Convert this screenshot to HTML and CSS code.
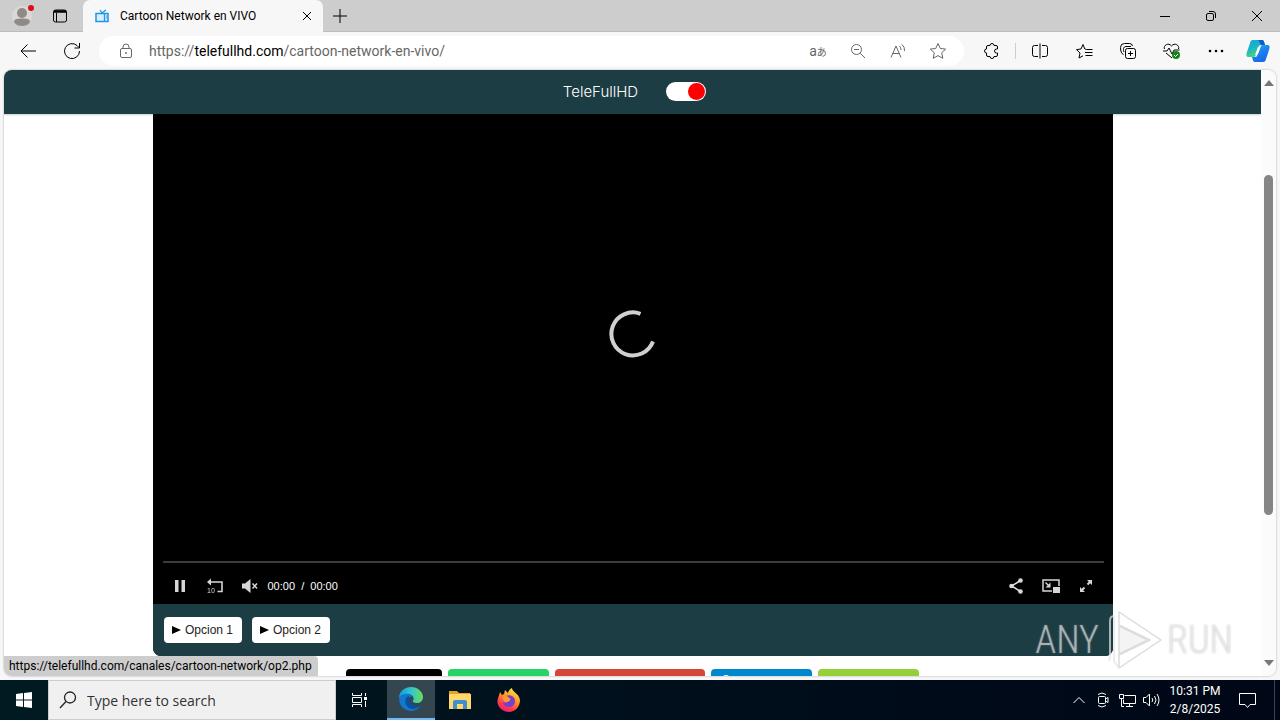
FILE: index.html
```
<!DOCTYPE html>
<html lang="en">
<head>
<meta charset="utf-8">
<title>Cartoon Network en VIVO</title>
<link rel="stylesheet" href="styles.css">
</head>
<body>
<header class="titlebar">
  <button class="tool profile" aria-label="Profile"><svg width="28" height="28" viewBox="0 0 28 28"><circle cx="14" cy="14" r="10" fill="#dcd8d6"/><circle cx="14" cy="11" r="5" fill="#8e8a88"/><path d="M6 20c0-3 3-3.500 8-3.500s8 .5 8 3.500c-2 3-5 4-8 4s-6-1-8-4z" fill="#8e8a88"/><circle cx="23" cy="6" r="3" fill="#e00b1c"/></svg></button>
  <button class="tool tabmenu" aria-label="Tab actions"><svg class="line" width="16" height="16" viewBox="0 0 16 16"><rect x="1.500" y="2" width="13" height="12" rx="2"/><path d="M2 3.500h12" stroke-width="2.500"/><path d="M4.500 5v9"/></svg></button>
  <div class="tab">
    <svg width="14" height="14" viewBox="0 0 14 14"><path d="M1 4.500h12v8H1z" fill="#d8efff" stroke="#2196e8" stroke-width="1.500"/><path d="M5 1l2 3 4-3M9.500 4v9" fill="none" stroke="#2196e8" stroke-width="1.300"/><path d="M11 7h1M11 9h1" stroke="#2196e8"/></svg>
    <span class="tab-title">Cartoon Network en VIVO</span>
    <button class="tab-close" aria-label="Close tab"><svg class="line" width="10" height="10" viewBox="0 0 10 10"><path d="M1 1l8 8M9 1L1 9"/></svg></button>
  </div>
  <button class="new-tab" aria-label="New tab"><svg class="line" width="14" height="14" viewBox="0 0 14 14"><path d="M7 0v14M0 7h14"/></svg></button>
  <div class="window-buttons">
    <button aria-label="Minimize"><svg class="line" width="10" height="10" viewBox="0 0 10 10"><path d="M0 5.500h10"/></svg></button>
    <button aria-label="Restore"><svg class="line" width="10" height="10" viewBox="0 0 10 10"><rect x=".5" y="2.500" width="7" height="7" rx="1.500"/><path d="M3 .5h4a2.500 2.500 0 0 1 2.500 2.500v4"/></svg></button>
    <button aria-label="Close"><svg class="line" width="10" height="10" viewBox="0 0 10 10"><path d="M0 0l10 10M10 0L0 10"/></svg></button>
  </div>
</header>

<nav class="toolbar" aria-label="Browser">
  <button class="nav-button" aria-label="Back"><svg class="line" width="18" height="16" viewBox="0 0 18 16"><path d="M17 8H2M8.500 1.500L2 8l6.500 6.500"/></svg></button>
  <button class="nav-button" aria-label="Refresh"><svg class="line" width="18" height="18" viewBox="0 0 18 18"><path d="M16.500 9A7.500 7.500 0 1 1 14 3.500L16 5.500M16.500 1v5h-5"/></svg></button>
  <div class="address">
    <button class="lock" aria-label="Site information"><svg class="line" width="14" height="16" viewBox="0 0 14 16"><rect x="1.500" y="5.500" width="11" height="9" rx="1.500"/><path d="M4 5.500V4a3 3 0 0 1 6 0v1.500"/><circle cx="7" cy="10" r=".6"/></svg></button>
    <a class="url" href="#">https://<b>telefullhd.com</b>/cartoon-network-en-vivo/</a>
    <button class="tool translate" aria-label="Translate">a<small>あ</small></button>
    <button class="tool" aria-label="Zoom out"><svg class="line" width="16" height="16" viewBox="0 0 16 16"><circle cx="6.500" cy="6.500" r="5"/><path d="M10.200 10.200L15 15M4 6.500h5"/></svg></button>
    <button class="tool" aria-label="Read aloud"><svg class="line" width="18" height="16" viewBox="0 0 18 16"><path d="M2 14.500L7 3l5 11.500M3.500 10.500h7M10.500 3q1.500 1.500 1.500 4M13 1.500q3 2.500 2.500 6.500"/></svg></button>
    <button class="tool" aria-label="Favorite"><svg class="line" width="18" height="18" viewBox="0 0 18 18"><path d="M9 1.500l2.300 5 5.400.6-4 3.700 1.100 5.500L9 13.600l-4.800 2.700 1.100-5.500-4-3.700 5.400-.6z"/></svg></button>
  </div>
  <button class="tool extensions" aria-label="Extensions"><svg class="line" width="16" height="16" viewBox="0 0 16 16"><path d="M5 2.500h2a2 2 0 0 1 4 0h2q1.500 0 1.500 1.500v2h-1a2 2 0 0 0 0 4h1v2q0 1.500-1.500 1.500h-2a2 2 0 0 1-4 0H5q-1.500 0-1.500-1.500V10a2 2 0 0 1 0-4V4q0-1.500 1.500-1.500z"/></svg></button>
  <span class="divider"></span>
  <button class="action" aria-label="Split screen"><svg class="line" width="16" height="16" viewBox="0 0 16 16"><path d="M8 .5v15M6 2.500H2.500a2 2 0 0 0-2 2v7a2 2 0 0 0 2 2H6M10 2.500h3.500a2 2 0 0 1 2 2v7a2 2 0 0 1-2 2H10"/></svg></button>
  <button class="action" aria-label="Favorites"><svg class="line" width="17" height="16" viewBox="0 0 17 16"><path d="M10.500 6.500L8.800 6 7 1.500 5 6l-4.500.6L4 10l-1 5 4-2.200M10.500 6.500h6M9 9.500h7.500M9.500 12.500h7"/></svg></button>
  <button class="action" aria-label="Collections"><svg class="line" width="16" height="16" viewBox="0 0 16 16"><rect x="5.500" y="5.500" width="10" height="10" rx="2"/><path d="M10.500 8v5M8 10.500h5M3.500 11.500C1.500 11 .5 8 .5 4.500a4 4 0 0 1 4-4h5a3 3 0 0 1 3 2.500M4 9c-1-2-.8-5.500 2-5.500h5"/></svg></button>
  <button class="action" aria-label="Browser essentials"><svg class="line" width="18" height="16" viewBox="0 0 18 16"><path d="M1.500 6C0 2.500 5.500-1 8.500 3c3-4 8.500-.5 7 3M0 8h4l2-3 3 6 2-4h5.500M3 10l6 5"/><circle cx="13" cy="12" r="4" fill="#16821c" stroke="none"/><path d="M11 12l1.500 1.500L15 11" stroke="#fff"/></svg></button>
  <button class="action" aria-label="Settings and more"><svg width="16" height="4" viewBox="0 0 16 4"><circle cx="2" cy="2" r="1.300"/><circle cx="8" cy="2" r="1.300"/><circle cx="14" cy="2" r="1.300"/></svg></button>
  <button class="tool" aria-label="Copilot"><svg width="24" height="24" viewBox="0 0 24 24"><defs><linearGradient id="cp1" x2=".5" y2="1"><stop stop-color="#1b9ee8"/><stop offset=".5" stop-color="#18b7c4"/><stop offset="1" stop-color="#55d67c"/></linearGradient><linearGradient id="cp2" x2=".5" y2="1"><stop stop-color="#29b8d8"/><stop offset=".5" stop-color="#1c83f2"/><stop offset="1" stop-color="#1769e8"/></linearGradient></defs><path d="M7 1h9c2 0 2 2 3 5h-4c-2 0-2 1-3 4l-2 6c-.5 1-1 2-3 2H3c-3 0-3-2-2-5l3-9c.6-2 1-3 3-3z" fill="url(#cp1)"/><path d="M17 23H9c-2 0-2-2-3-5h3c2 0 2-1 3-4l2-6c.5-1 1-2 3-2h4c3 0 3 2 2 5l-3 9c-.6 2-1 3-3 3z" fill="url(#cp2)"/><path d="M7 1h9c2 0 2 2 3 5h-4c-1 0-1-5-4-5z" fill="#125bc8"/><path d="M12 8l3-1-3 8-3 1z" fill="#fff"/></svg></button>
</nav>

<div class="frame">
  <div class="page">
    <header class="site-header">
      <a class="brand" href="#">TeleFullHD</a>
      <input class="switch" type="checkbox" role="switch" aria-label="Theme" checked>
    </header>
    <main class="content">
      <section class="player">
        <div class="stage"><svg width="50" height="50" viewBox="0 0 50 50" aria-label="Loading"><path d="M32.500 4.800A21.500 21.500 0 1 0 45 32.500" fill="none" stroke="#d0d0d0" stroke-width="4"/></svg></div>
        <div class="controls">
          <div class="progress"></div>
          <div class="control-row">
            <button aria-label="Pause"><svg width="12" height="14" viewBox="0 0 12 14"><path d="M1 1h3.500v12H1zM7.500 1H11v12H7.500z"/></svg></button>
            <button aria-label="Rewind 10 seconds"><svg width="18" height="16" viewBox="0 0 18 16"><path d="M5 4h11v9.500h-4.500" fill="none" stroke="#d6d6d6" stroke-width="1.600"/><path d="M1 4l4-3.500v7z"/><text x="1" y="15" class="ten">10</text></svg></button>
            <button aria-label="Unmute"><svg width="16" height="14" viewBox="0 0 16 14"><path d="M0 4.500h3L8.500 0v14L3 9.500H0z"/><path d="M10.500 4.500l4.500 5M15 4.500l-4.500 5" fill="none" stroke="#d6d6d6" stroke-width="1.500"/></svg></button>
            <span class="time">00:00&nbsp; /&nbsp; 00:00</span>
            <button aria-label="Share"><svg width="16" height="18" viewBox="0 0 16 18"><circle cx="12.500" cy="3.500" r="2.300"/><circle cx="3.500" cy="9" r="2.300"/><circle cx="12.500" cy="14.500" r="2.300"/><path d="M12.500 3.500L3.500 9l9 5.500" fill="none" stroke="#e0e0e0" stroke-width="1.500"/></svg></button>
            <button aria-label="Picture in picture"><svg width="18" height="14" viewBox="0 0 18 14"><path d="M10 12H1V1h16v6" fill="none" stroke="#d6d6d6" stroke-width="1.500"/><path d="M11 8h7v6h-7zM8.500 3.500v5h-5zM4 3l3 3-1 1-3-3z"/></svg></button>
            <button aria-label="Fullscreen"><svg width="14" height="14" viewBox="0 0 14 14"><path d="M8 1h5v5zM1 8v5h5z"/><path d="M12 2L8.500 5.500M5.500 8.500L2 12" stroke="#d6d6d6" stroke-width="2"/></svg></button>
          </div>
        </div>
        <div class="options">
          <button class="option"><svg width="9" height="8" viewBox="0 0 9 8"><path d="M0 0l9 4-9 4z"/></svg>Opcion 1</button>
          <button class="option"><svg width="9" height="8" viewBox="0 0 9 8"><path d="M0 0l9 4-9 4z"/></svg>Opcion 2</button>
        </div>
      </section>
      <div class="shares">
        <button class="share x" aria-label="X"></button>
        <button class="share whatsapp" aria-label="WhatsApp"></button>
        <button class="share mail" aria-label="Mail"></button>
        <button class="share telegram" aria-label="Telegram"><svg width="20" height="20" viewBox="0 0 20 20"><circle cx="10" cy="10" r="5" fill="#fff"/></svg></button>
        <button class="share sharethis" aria-label="ShareThis"></button>
      </div>
    </main>
  </div>
  <div class="scrollbar">
    <svg width="10" height="6" viewBox="0 0 10 6"><path d="M0 6l5-6 5 6z"/></svg>
    <div class="track"><div class="thumb"></div></div>
    <svg width="10" height="6" viewBox="0 0 10 6"><path d="M0 0l5 6 5-6z"/></svg>
  </div>
  <div class="status">https://telefullhd.com/canales/cartoon-network/op2.php</div>
  <div class="watermark"><span>ANY</span><svg width="60" height="64" viewBox="0 0 60 64"><path d="M16 4v13l31 15-31 15v13l42-28z" fill="#fff" fill-opacity=".6" stroke="#dcdcdc" stroke-width="1.500" stroke-linejoin="round"/><path d="M16 18v28l29-14z" fill="#f4f4f4" stroke="#dcdcdc" stroke-width="1.500" stroke-linejoin="round"/><path d="M11 8q-4 0-4 5v35q0 4-2 4M11 8v45l5 7" fill="none" stroke="#e4e4e4" stroke-opacity=".7" stroke-width="2"/></svg><span>RUN</span></div>
</div>

<footer class="taskbar">
  <button class="start" aria-label="Start"><svg width="16" height="16" viewBox="0 0 16 16"><path d="M0 2l7-1v6.500H0zM8 .9L16 0v7.500H8zM0 8.500h7V15l-7-1zM8 8.500h8V16l-8-1z" fill="#fff"/></svg></button>
  <label class="search"><svg width="18" height="18" viewBox="0 0 18 18" fill="none" stroke="#222" stroke-width="1.300"><circle cx="11" cy="6.500" r="5.500"/><path d="M7 10.500L1 17"/></svg><input type="text" placeholder="Type here to search" aria-label="Search"></label>
  <button class="app" aria-label="Task view"><svg class="white" width="16" height="16" viewBox="0 0 16 16"><path d="M.5 1v2.500h9V1M.5 15v-2.500h9V15M.5 5.500h9v5h-9zM13.500 1v3M13.500 9v6"/><path d="M12 5h3v3h-3z" fill="#fff" stroke="none"/></svg></button>
  <button class="app active" aria-label="Edge"><svg width="24" height="24" viewBox="0 0 24 24"><defs><linearGradient id="eg"><stop stop-color="#159bd8"/><stop offset=".5" stop-color="#31c6d2"/><stop offset="1" stop-color="#6bdc56"/></linearGradient></defs><path d="M0 11C0 4 6 0 12 0c7 0 12 5 12 10 0 4-3 6-6 6-3 0-5-1-4-2.500C16 11 13 7 9 7 5 7 1 9 0 11z" fill="url(#eg)"/><path d="M0 11c2-5 12-6 14-1-4-2-7 4-4 8s9 3 12 0c-3 5-8 7-13 5.500C3 22 0 17 0 11z" fill="#1277cf"/><path d="M10 9c-4 1-5 6-2 10s9 4 14-1c-2 1-5 1.500-8 0-4-2-4-6-4-9z" fill="#0b4f9f"/></svg></button>
  <button class="app" aria-label="File Explorer"><svg width="22" height="20" viewBox="0 0 22 20"><path d="M0 1h8l2 2h11v5H0z" fill="#e8a126"/><path d="M0 4h22v15H0z" fill="#ffd86b"/><path d="M4 19v-7q0-2 2-2h10q2 0 2 2v7h-4v-5H8v5z" fill="#3e8fcb"/></svg></button>
  <button class="app" aria-label="Firefox"><svg width="24" height="24" viewBox="0 0 24 24"><defs><linearGradient id="fx" x1=".8" x2=".3" y2="1"><stop stop-color="#fff043"/><stop offset=".4" stop-color="#ff9c24"/><stop offset=".75" stop-color="#ff3c4b"/><stop offset="1" stop-color="#e51b75"/></linearGradient></defs><path d="M3 4l2 3 2-1 1-4 3 3c1-3 2-4 4-5 0 4 7 5 8 12 0 7-5 12-11 12S0 19 .5 13C1 9 2 8 3 4z" fill="url(#fx)"/><path d="M9 8c3-2 9 0 9 5 0 4-3 6-6 6s-6-2-6-5c2 1 4 1 5-1l-3-2z" fill="#7541ca"/><path d="M6 9c3-2 5-1 6 1 2 0 2 3-2 4-3 0-4-2-4-5z" fill="#ff9b2c"/></svg></button>
  <div class="tray">
    <button aria-label="Show hidden icons"><svg class="white" width="12" height="8" viewBox="0 0 12 8"><path d="M.5 7L6 1.500 11.500 7"/></svg></button>
    <button aria-label="Camera"><svg class="white" width="14" height="16" viewBox="0 0 14 16"><rect x="2.500" y="4.500" width="7" height="7" rx="1"/><path d="M9.500 7l2.500-1.500v5L9.500 9M2 2.500q4-3 8 0M2 13.500q4 3 8 0"/></svg></button>
    <button aria-label="Network"><svg class="white" width="17" height="15" viewBox="0 0 17 15"><path d="M5.500 2.500h11v8h-12V6.500M10.500 10.500v3M7 13.500h7M.5 1.500h4v4h-4zM2.500 5.500v8H5"/></svg></button>
    <button aria-label="Volume"><svg class="white" width="17" height="14" viewBox="0 0 17 14"><path d="M.5 4.500H3L6.500 1v12L3 9.500H.5zM9 5q1.500 2 0 4M11.500 3q3 4 0 8M14 1q4 6 0 12"/></svg></button>
    <time class="clock">10:31 PM<br>2/8/2025</time>
    <button class="notify" aria-label="Notifications"><svg class="white" width="17" height="17" viewBox="0 0 17 17"><path d="M.5 1.500h16v11h-5.500L8.500 15.500 6 12.500H.5z"/></svg></button>
    <span class="peek"></span>
  </div>
</footer>
</body>
</html>
```
FILE: styles.css
```
* { box-sizing: border-box; }
body {
  margin: 0;
  height: 100vh;
  overflow: hidden;
  display: flex;
  flex-direction: column;
  background: #f7f7f7;
  color: #000;
  font-family: Roboto, "Noto Sans", "Noto Sans CJK JP", sans-serif;
  font-size: 12px;
}
button {
  display: flex;
  align-items: center;
  justify-content: center;
  flex: none;
  margin: 0;
  padding: 0;
  border: 0;
  background: none;
  color: inherit;
  font: inherit;
}
svg { display: block; flex: none; }
a { color: inherit; text-decoration: none; }
.line { fill: none; stroke: currentColor; stroke-width: 1; }
.white { fill: none; stroke: #fff; stroke-width: 1; }
.tool { width: 40px; height: 32px; }

.titlebar { display: flex; flex: none; height: 32px; background: #cdcdcd; border-bottom: 1px solid #bdbdbd; }
.profile { width: 44px; }
.tabmenu { width: 32px; margin-right: 7px; }
.tab {
  display: flex;
  align-items: center;
  flex: 0 1 240px;
  height: 32px;
  padding: 0 11px 0 12px;
  border-radius: 7px 7px 0 0;
  background: #f7f7f7;
}
.tab-title { flex: 1; margin-left: 11px; white-space: nowrap; }
.tab-close { width: 10px; height: 20px; }
.new-tab { width: 34px; height: 32px; }
.window-buttons { display: flex; margin-left: auto; }
.window-buttons button { width: 46px; height: 32px; }

.toolbar { display: flex; align-items: center; flex: none; height: 38px; padding: 0 2px 0 6px; }
.nav-button { width: 44px; height: 32px; }
.address {
  display: flex;
  align-items: center;
  flex: 1;
  min-width: 0;
  height: 30px;
  margin-left: 5px;
  padding: 0 6px 0 20px;
  border-radius: 15px;
  background: #fff;
  color: #666;
}
.lock { width: 14px; margin-right: 16px; }
.url { flex: 1; font-size: 14px; white-space: nowrap; overflow: hidden; }
.url b { color: #000; font-weight: 400; }
.translate { align-items: baseline; line-height: 32px; font-size: 14px; }
.translate small { font-size: 10px; }
.extensions { margin-left: 7px; }
.divider { width: 1px; height: 16px; margin: 0 2px 0 4px; background: #ccc; }
.action { width: 44px; height: 32px; }

.frame {
  position: relative;
  display: flex;
  flex: 1;
  min-height: 0;
  margin: 0 4px 4px;
  border-radius: 8px;
  overflow: hidden;
  background: #fff;
  box-shadow: 0 0 2px #999;
}
.page { display: flex; flex-direction: column; flex: 1; min-width: 0; }
.site-header {
  display: flex;
  align-items: center;
  justify-content: center;
  gap: 28px;
  flex: none;
  height: 44px;
  padding: 0 0 2px 4px;
  background: #1d3d44;
  color: #fff;
  box-shadow: 0 1px 2px #ccc;
}
.brand { font-family: Inter, "Liberation Sans", sans-serif; font-size: 15px; font-weight: 300; }
.switch {
  appearance: none;
  display: flex;
  justify-content: flex-end;
  width: 40px;
  height: 19px;
  margin: 0;
  padding: 1px;
  border-radius: 10px;
  background: #fff;
}
.switch::before { content: ""; width: 17px; height: 17px; border-radius: 50%; background: #f00; }
.content { display: flex; flex-direction: column; align-items: center; flex: 1; min-height: 0; }
.player {
  position: relative;
  display: flex;
  flex-direction: column;
  flex: 1;
  width: 100%;
  max-width: 960px;
  border-radius: 0 0 8px 8px;
  overflow: hidden;
  background: #000;
}
.stage { display: flex; align-items: center; justify-content: center; flex: 1; }
.controls { height: 50px; padding: 7px 9px 0 10px; }
.progress { height: 2px; background: #3c3c3c; }
.control-row { display: flex; align-items: center; height: 46px; color: #fff; }
.control-row button { width: 35px; height: 30px; fill: #d6d6d6; }
.control-row button svg { overflow: visible; }
.ten { font: 7px "Liberation Sans", sans-serif; }
.time { flex: 1; font: 11px "Liberation Sans", sans-serif; }
.options { display: flex; align-items: center; gap: 10px; height: 52px; padding: 0 11px; background: #1d3d44; }
.option {
  gap: 4px;
  width: 78px;
  height: 26px;
  border-radius: 4px;
  background: #fff;
  color: #222;
  font-family: "Liberation Sans", sans-serif;
  font-size: 12px;
}
.shares { display: flex; gap: 6px; flex: none; height: 20px; padding-top: 13px; overflow: hidden; }
.share { align-items: flex-start; justify-content: flex-start; width: 101px; height: 32px; padding: 1px 5px; border-radius: 4px; }
.x { width: 96px; background: #000; }
.whatsapp { background: #25d366; }
.mail { width: 150px; background: #d44638; }
.telegram { background: #0088cc; }
.sharethis { background: #95d03a; }

.scrollbar {
  display: flex;
  flex-direction: column;
  align-items: center;
  flex: none;
  width: 15px;
  padding: 10px 0;
  background: #fbfbfb;
  fill: #777;
}
.track { display: flex; flex-direction: column; flex: 1; padding: 89px 0 145px; }
.thumb { flex: 1; width: 9px; border-radius: 5px; background: #858585; }
.status {
  position: absolute;
  left: 0;
  bottom: 0;
  height: 20px;
  padding: 0 6px 0 5px;
  border-radius: 0 4px 0 0;
  background: #cdcdcd;
  line-height: 20px;
  white-space: nowrap;
}
.watermark {
  position: absolute;
  right: 43px;
  bottom: 4px;
  display: flex;
  align-items: center;
  gap: 4px;
  color: rgba(255, 255, 255, 0.5);
  font-family: "Roboto Condensed", Roboto, sans-serif;
  font-size: 38px;
  font-weight: 300;
  text-shadow: 0 0 2px rgba(150, 150, 150, 0.6);
}

.taskbar {
  display: flex;
  flex: none;
  height: 40px;
  background: linear-gradient(90deg, #001a22, #000d1a 60%, #000716);
  color: #fff;
}
.start { width: 48px; }
.search {
  display: flex;
  align-items: center;
  flex: 0 1 288px;
  gap: 10px;
  padding: 0 10px;
  border: 1px solid #ccc;
  background: #f0f0f0;
}
.search input {
  flex: 1;
  min-width: 0;
  padding: 0;
  border: 0;
  background: none;
  color: #333;
  font-family: "Open Sans", sans-serif;
  font-size: 14px;
}
.search input::placeholder { color: #333; }
.app { width: 48px; margin-right: 1px; }
.active { margin-left: 2px; background: #34464f; border-bottom: 2px solid #76b9ed; }
.tray { display: flex; align-items: center; margin-left: auto; }
.tray button { width: 24px; height: 40px; }
.clock { width: 64px; text-align: center; line-height: 18px; }
.tray .notify { width: 40px; }
.peek { width: 1px; height: 40px; margin: 0 5px 0 7px; background: #3d444e; }
```
